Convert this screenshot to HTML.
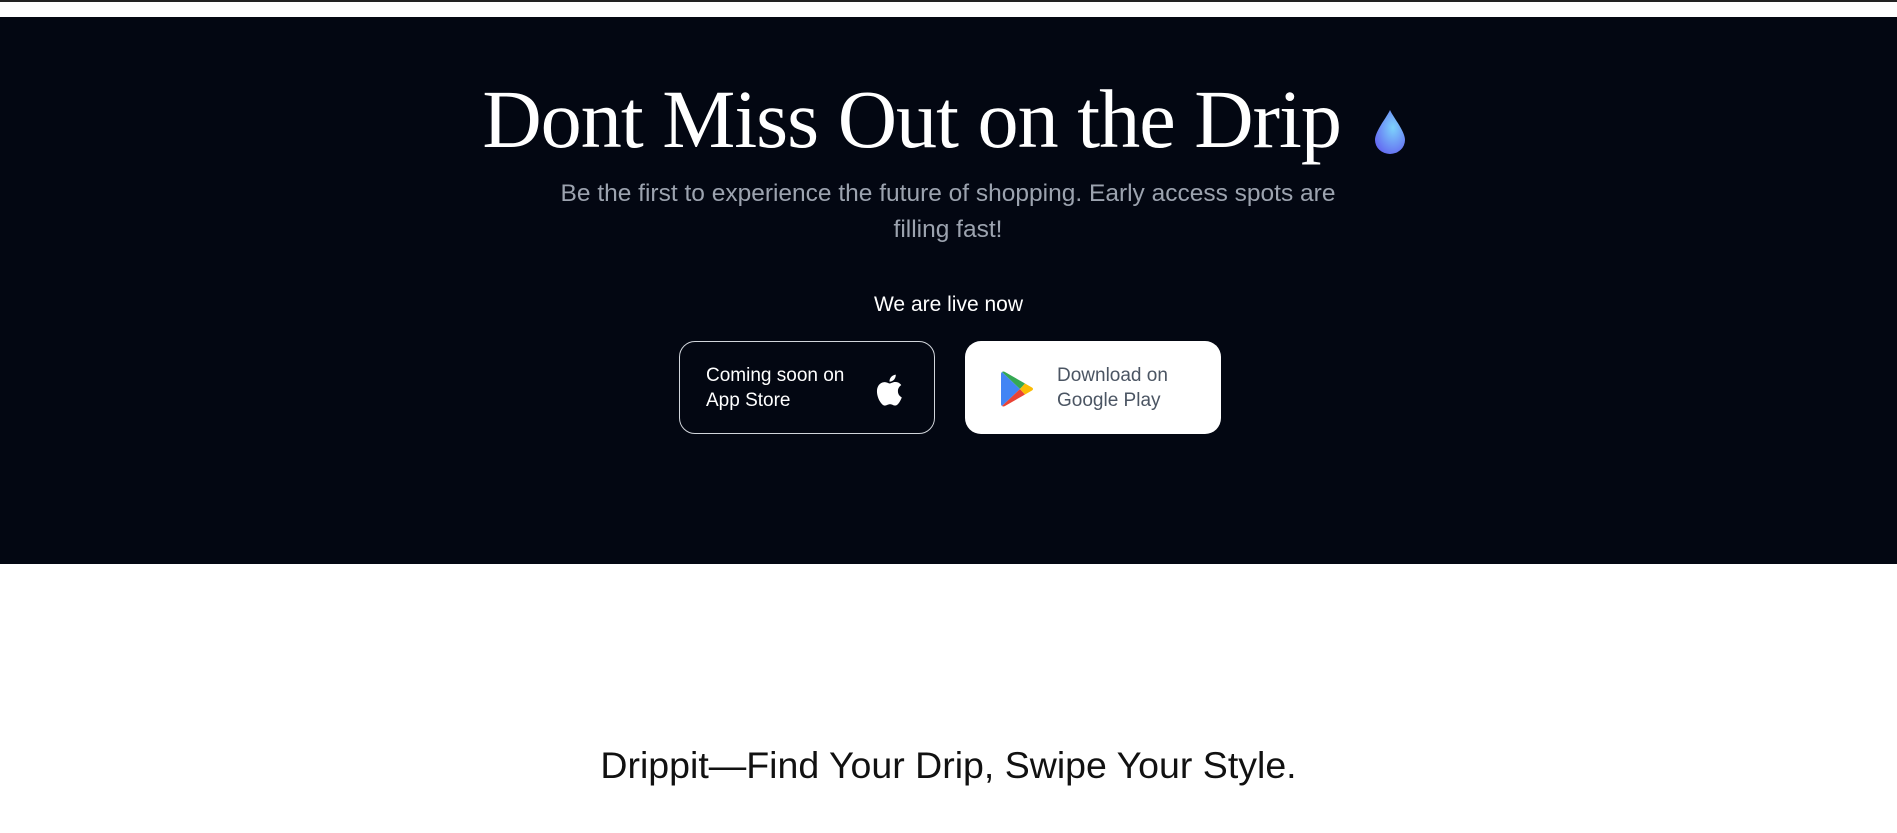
<!DOCTYPE html>
<html><head><meta charset="utf-8"><style>
*{margin:0;padding:0;box-sizing:border-box}
html,body{width:1897px;height:833px;overflow:hidden;background:#fff;font-family:"Liberation Sans",sans-serif}
.topline{height:2px;background:#222}
.hero{position:absolute;top:17px;left:0;width:1897px;height:547px;background:#030712}
h1{position:absolute;top:52px;left:0;width:1897px;text-align:center;font-family:"Liberation Serif",serif;font-weight:400;color:#fff;font-size:83px;line-height:100px;letter-spacing:-1px}
h1 span.t{display:inline-block;transform:scaleX(0.99);transform-origin:center;position:relative;left:-37px}
.drop{position:absolute;left:1373px;top:92px}
.sub{position:absolute;top:159px;left:538px;width:820px;text-align:center;color:#9ca3af;font-size:24.5px;line-height:36px}
.live{position:absolute;top:276px;left:0;width:1897px;text-align:center;color:#fff;font-size:21px}
.btn{position:absolute;top:324px;width:256px;height:93px;border-radius:16px;display:flex;align-items:center;font-size:19px;line-height:25px}
.apple{left:679px;border:1px solid #d1d5db;color:#fff;padding-left:26px}
.apple svg{position:absolute;left:192px;top:30px}
.gp{left:965px;background:#fff;color:#4b5563;padding-left:92px}
.gp svg{position:absolute;left:36px;top:29px}
.tag{position:absolute;top:744px;left:0;width:1897px;text-align:center;font-size:37.5px;color:#111}
</style></head><body>
<div class="topline"></div>
<div class="hero">
<h1><span class="t">Dont Miss Out on the Drip</span></h1>
<svg class="drop" width="34" height="46" viewBox="0 0 34 46"><defs><radialGradient id="g" cx="0.6" cy="0.4" r="0.7"><stop offset="0" stop-color="#7dd3fc"/><stop offset="1" stop-color="#6366f1"/></radialGradient></defs><path d="M17 1C14 8 2 22 2 31a15 14 0 0 0 30 0C32 22 20 8 17 1z" fill="url(#g)"/></svg>
<div class="sub">Be the first to experience the future of shopping. Early access spots are filling fast!</div>
<div class="live">We are live now</div>
<div class="btn apple"><div>Coming soon on<br>App Store</div>
<svg width="32" height="36" viewBox="0 0 24 28"><path fill="#fff" d="M19.7 14.8c0-3 2.5-4.5 2.6-4.6-1.4-2.1-3.6-2.4-4.4-2.4-1.9-.2-3.6 1.1-4.6 1.1s-2.4-1.1-3.9-1c-2 0-3.9 1.2-5 3-2.1 3.7-.5 9.2 1.5 12.2 1 1.5 2.2 3.1 3.8 3 1.5-.1 2.1-1 3.9-1s2.3 1 3.9 1c1.6 0 2.6-1.5 3.6-3 1.1-1.7 1.6-3.3 1.6-3.4-.1 0-3-1.2-3-4.9zM16.8 5.8c.8-1 1.4-2.4 1.2-3.8-1.2.1-2.6.8-3.5 1.8-.8.9-1.5 2.3-1.3 3.7 1.3.1 2.7-.7 3.6-1.7z"/></svg></div>
<div class="btn gp"><svg width="34" height="38" viewBox="0 0 34 38"><path d="M1 2l18 17L1 36c-.6-.4-1-1-1-2V4c0-1 .4-1.6 1-2z" fill="#4285f4"/><path d="M1 2c.8-.6 2-.6 3 0l20 11.5-5 5.5z" fill="#34a853"/><path d="M1 36l18-17 5 5.5L4 36c-1 .6-2.2.6-3 0z" fill="#ea4335"/><path d="M24 13.5l7 4c1.4.8 1.4 2.2 0 3l-7 4-5-5.5z" fill="#fbbc04"/></svg>
<div>Download on<br>Google Play</div></div>
</div>
<div class="tag">Drippit—Find Your Drip, Swipe Your Style.</div>
</body></html>
